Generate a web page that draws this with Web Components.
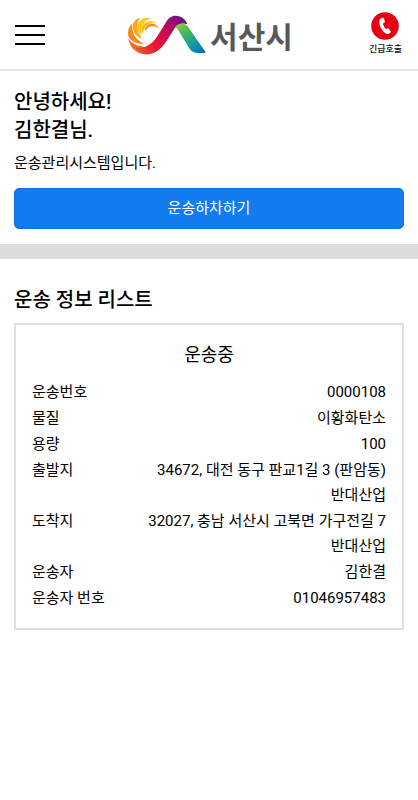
<!DOCTYPE html>
<html lang="ko">
<head>
<meta charset="utf-8">
<meta name="viewport" content="width=device-width, initial-scale=1">
<title>운송관리시스템</title>
<style>
body { margin: 0; background: #fff; color: #000; font-family: Roboto, "Noto Sans CJK KR", sans-serif; font-size: 15px; line-height: 25px; }
</style>
</head>
<body>
<transport-app></transport-app>
<script>
const define = (name, html) => {
  const template = document.createElement('template');
  template.innerHTML = html;
  customElements.define(name, class extends HTMLElement {
    constructor() {
      super();
      this.attachShadow({ mode: 'open' }).append(template.content.cloneNode(true));
    }
  });
};

define('menu-button', `
<style>
:host { display: block; }
button { display: flex; flex-direction: column; gap: 7px; width: 30px; padding: 0; border: 0; background: none; cursor: pointer; }
span { height: 2px; align-self: stretch; background: #000; }
</style>
<button type="button" aria-label="메뉴"><span></span><span></span><span></span></button>`);

define('city-logo', `
<style>
:host { display: block; padding-left: 3px; }
a { display: flex; align-items: center; gap: 3px; color: #58585a; text-decoration: none; font-family: "Noto Sans CJK KR", sans-serif; font-size: 30px; line-height: 38px; font-weight: 700; }
svg { display: block; width: 80px; height: 40px; }
</style>
<a href="#" aria-label="서산시">
<svg viewBox="18 24 240 120" aria-hidden="true">
<defs>
<linearGradient id="band" gradientUnits="userSpaceOnUse" x1="55" y1="135" x2="185" y2="30"><stop offset="0" stop-color="#f0512a"/><stop offset=".28" stop-color="#e71935"/><stop offset=".55" stop-color="#ce0c50"/><stop offset=".82" stop-color="#980a78"/><stop offset="1" stop-color="#681285"/></linearGradient>
<linearGradient id="leg" gradientUnits="userSpaceOnUse" x1="178" y1="50" x2="238" y2="138"><stop offset="0" stop-color="#8dc63f"/><stop offset=".35" stop-color="#39b36b"/><stop offset=".68" stop-color="#129da4"/><stop offset="1" stop-color="#0873ba"/></linearGradient>
</defs>
<path fill="#f36b21" d="M22 92C24 120 46 142 76 142C100 140 118 124 126 104C106 122 82 126 60 118C42 114 28 106 22 92Z"/>
<path fill="#f58a1f" d="M33 50C20 62 18 80 25 93C36 108 54 112 70 110C45 99 32 80 33 50Z"/>
<path fill="#fba919" d="M58 32C38 36 31 54 37 71C42 84 52 92 65 96C47 77 43 50 58 32Z"/>
<path fill="#fdc91f" d="M90 34C66 28 49 42 49 62C49 72 54 80 62 85C58 60 68 42 90 34Z"/>
<path fill="#fdb71b" d="M62 74C59 51 80 36 107 46C84 46 68 57 67 77Z"/>
<path fill="#f58a1f" d="M71 67C77 48 103 42 115 65C98 53 83 55 74 71Z"/>
<path fill="url(#band)" d="M42 122C70 126 94 111 108 89L134 47C143 32 151 26 164 26C182 26 194 39 200 52C185 47 170 51 162 62L139 98C120 128 102 142 73 142C59 140 49 132 42 122Z"/>
<path fill="url(#leg)" d="M162 62C169 49 190 46 200 58L253 134C254 137 253 138 249 138H230C217 138 210 132 203 121L171 68C169 64 166 62 162 62Z"/>
</svg><span>서산시</span></a>`);

define('emergency-call', `
<style>
:host { display: block; }
button { display: flex; flex-direction: column; align-items: center; gap: 1px; padding: 0; border: 0; background: none; color: #111; font-family: "Noto Sans CJK KR", sans-serif; font-size: 9px; line-height: 16px; font-weight: 500; cursor: pointer; white-space: nowrap; }
svg { display: block; width: 28px; height: 28px; }
</style>
<button type="button"><svg viewBox="0 0 28 28" aria-hidden="true"><circle cx="14" cy="14" r="13.8" fill="#e60012"/><path fill="#fff" d="M10.3 6.3l1.5-.5c.6-.2 1 0 1.2.6l.9 3c.2.5 0 .9-.4 1.2l-1.5 1c.3 2.2 1.3 4 2.9 5.5l1.6-.7c.5-.2.9-.1 1.2.3l1.8 2.4c.4.5.3 1-.1 1.4l-1.2 1c-1 .8-2.2.8-3.3 0-4.1-2.7-6.5-7.2-6.6-12 0-1.5.6-2.7 2-3.2z"/></svg>긴급호출</button>`);

define('app-header', `
<style>
:host { display: block; border-bottom: 2px solid #e5e5e5; }
header { display: grid; grid-template-columns: 1fr auto 1fr; align-items: center; padding: 12px 16px 12px 15px; }
emergency-call { justify-self: end; }
</style>
<header><menu-button></menu-button><city-logo></city-logo><emergency-call></emergency-call></header>`);

define('welcome-panel', `
<style>
:host { display: block; padding: 17px 14px 15px; border-bottom: 15px solid #dcdcdc; }
h1 { margin: 0; font-size: 20px; line-height: 28px; font-weight: 500; }
p { margin: 7px 0 12px; }
button { display: block; width: 100%; padding: 7px; border: 1px solid #0f72df; border-radius: 5px; background: #127cef; color: #fff; font: inherit; cursor: pointer; }
</style>
<h1><slot name="greeting"></slot><br><slot name="user"></slot></h1>
<p><slot></slot></p>
<button type="button">운송하차하기</button>`);

define('info-row', `
<style>
:host { display: flex; justify-content: space-between; gap: 16px; }
dt { flex: none; }
dd { margin: 0; text-align: right; }
</style>
<dt><slot name="label"></slot></dt><dd><slot></slot></dd>`);

define('transport-card', `
<style>
:host { display: block; border: 2px solid #dfdfdf; padding: 17px 16px; }
h3 { margin: 0 0 12px; text-align: center; font-size: 18px; line-height: 26px; font-weight: 400; }
dl { display: flex; flex-direction: column; gap: 1px; margin: 0; }
</style>
<h3><slot name="status"></slot></h3>
<dl><slot></slot></dl>`);

define('transport-app', `
<style>
:host { display: block; }
section { padding: 27px 14px; }
h2 { margin: 0 0 9px; font-size: 20px; line-height: 28px; font-weight: 500; }
</style>
<app-header></app-header>
<main>
<welcome-panel><span slot="greeting">안녕하세요!</span><span slot="user">김한결님.</span>운송관리시스템입니다.</welcome-panel>
<section>
<h2>운송 정보 리스트</h2>
<transport-card><span slot="status">운송중</span>
<info-row><span slot="label">운송번호</span>0000108</info-row>
<info-row><span slot="label">물질</span>이황화탄소</info-row>
<info-row><span slot="label">용량</span>100</info-row>
<info-row><span slot="label">출발지</span>34672, 대전 동구 판교1길 3 (판암동)<br>반대산업</info-row>
<info-row><span slot="label">도착지</span>32027, 충남 서산시 고북면 가구전길 7<br>반대산업</info-row>
<info-row><span slot="label">운송자</span>김한결</info-row>
<info-row><span slot="label">운송자 번호</span>01046957483</info-row>
</transport-card>
</section>
</main>`);
</script>
</body>
</html>
